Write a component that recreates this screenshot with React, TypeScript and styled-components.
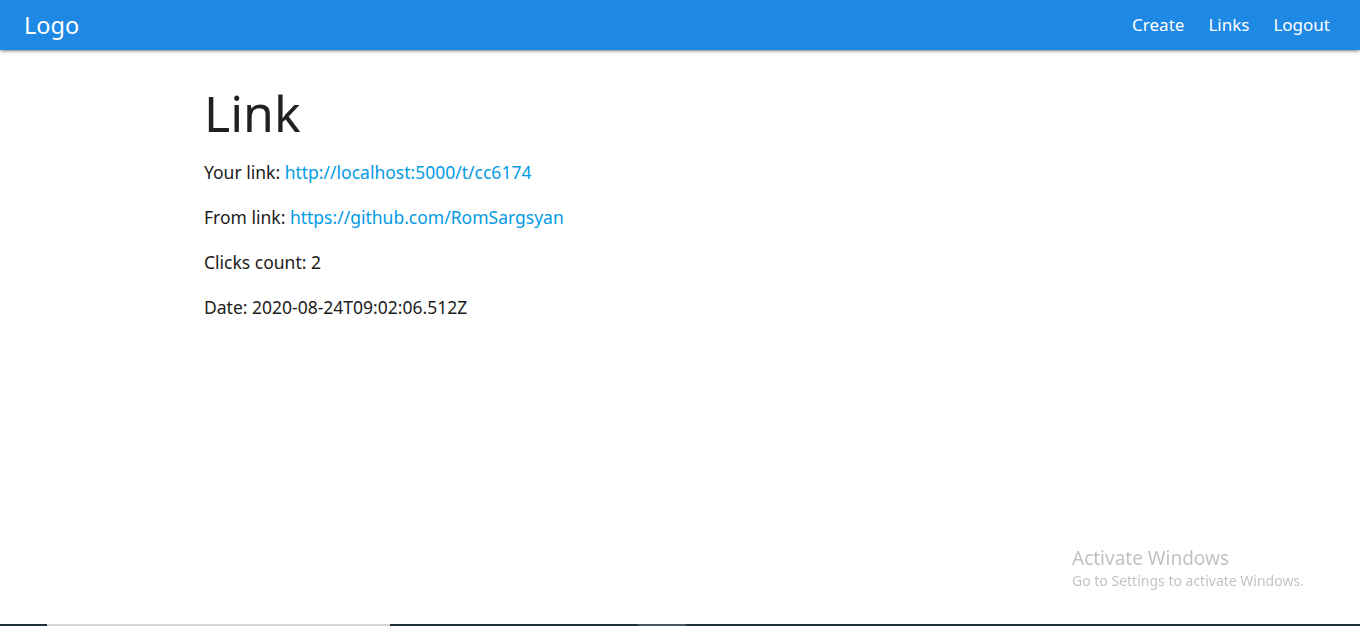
import React from "react";
import styled, { createGlobalStyle } from "styled-components";

const Global = createGlobalStyle`
  html, body { margin: 0; padding: 0; }
  body {
    font-family: "Noto Sans", "Open Sans", sans-serif;
    color: rgba(0, 0, 0, 0.87);
    background: #fff;
  }
  * { box-sizing: border-box; }
`;

const Page = styled.div`
  display: flex;
  flex-direction: column;
  height: 100vh;
`;

const Nav = styled.nav`
  height: 50px;
  background: #1e88e5;
  display: flex;
  align-items: center;
  justify-content: space-between;
  padding: 0 18px 0 24px;
  box-shadow: 0 2px 2px 0 rgba(0,0,0,0.14), 0 3px 1px -2px rgba(0,0,0,0.12), 0 1px 5px 0 rgba(0,0,0,0.2);
  position: relative;
  z-index: 1;
`;

const Brand = styled.a`
  color: #fff;
  font-size: 23.5px;
  text-decoration: none;
  line-height: 50px;
`;

const Menu = styled.ul`
  list-style: none;
  margin: 0;
  padding: 0;
  display: flex;
`;

const MenuLink = styled.a`
  display: block;
  color: #fff;
  font-size: 17px;
  padding: 0 12px;
  line-height: 50px;
  text-decoration: none;
`;

const Main = styled.main`
  flex: 1;
  width: 70%;
  margin: 0 auto;
`;

const Title = styled.h1`
  font-size: 50px;
  font-weight: 400;
  margin: 33px 0 16px;
  line-height: 60px;
`;

const Line = styled.p`
  font-size: 17.5px;
  line-height: 27px;
  margin: 0 0 18px;
  color: #1c1c1c;
`;

const Anchor = styled.a`
  color: #039be5;
  text-decoration: none;
`;

const Watermark = styled.div`
  position: fixed;
  left: 1072px;
  top: 545px;
  color: rgba(0, 0, 0, 0.25);
  font-family: "Noto Sans", sans-serif;
`;

const WmTitle = styled.div`
  font-size: 19px;
  line-height: 26px;
`;

const WmSub = styled.div`
  font-size: 14px;
  line-height: 19px;
`;

const Taskbar = styled.div`
  height: 2px;
  display: flex;
  background: #1f3038;
`;

const Seg = styled.div<{ $w: number; $c: string }>`
  width: ${(p) => p.$w}px;
  background: ${(p) => p.$c};
`;

export default function App() {
  return (
    <Page>
      <Global />
      <Nav>
        <Brand href="#">Logo</Brand>
        <Menu>
          <li><MenuLink href="#">Create</MenuLink></li>
          <li><MenuLink href="#">Links</MenuLink></li>
          <li><MenuLink href="#">Logout</MenuLink></li>
        </Menu>
      </Nav>
      <Main>
        <Title>Link</Title>
        <Line>
          Your link: <Anchor href="#">http://localhost:5000/t/cc6174</Anchor>
        </Line>
        <Line>
          From link: <Anchor href="#">https://github.com/RomSargsyan</Anchor>
        </Line>
        <Line>Clicks count: 2</Line>
        <Line>Date: 2020-08-24T09:02:06.512Z</Line>
      </Main>
      <Taskbar>
        <Seg $w={47} $c="#1f3038" />
        <Seg $w={343} $c="#d6d6d6" />
        <Seg $w={248} $c="#1f3038" />
        <Seg $w={48} $c="#4a5560" />
      </Taskbar>
      <Watermark>
        <WmTitle>Activate Windows</WmTitle>
        <WmSub>Go to Settings to activate Windows.</WmSub>
      </Watermark>
    </Page>
  );
}
